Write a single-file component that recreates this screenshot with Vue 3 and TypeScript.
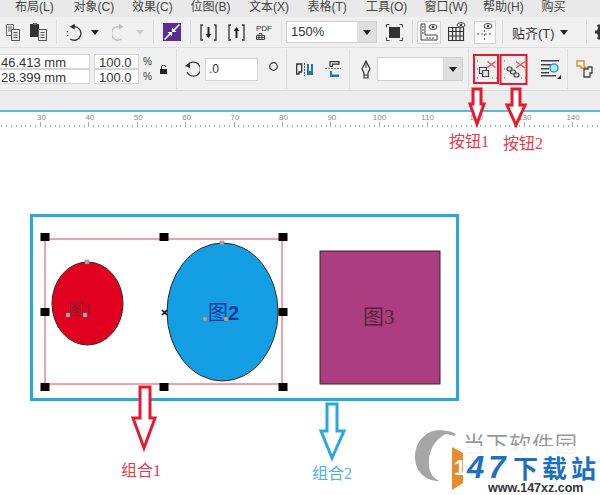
<template>
  <div class="page">
    <!-- 菜单 -->
    <nav class="menu">
      <span v-for="m in menus" :key="m" class="menu-item">{{ m }}</span>
    </nav>

    <!-- 第一行工具栏 -->
    <div class="bar bar-top">
      <div class="group g-doc">
        <svg width="14" height="18" viewBox="0 0 14 18"><path d="M.5 1.500h7v11h-7zM2 4h4M2 6h4M2 8h4" fill="none" stroke="#666" /><path d="M5.500 6.500h8v11h-8z" fill="#e8e8e8" stroke="#555" /><path d="M7.500 9.500h4M7.500 12h4M7.500 14.500h4" stroke="#555" /></svg>
        <svg width="17" height="18" viewBox="0 0 17 18"><path d="M0 1h9v13H0z" fill="#333" /><path d="M3 0h4v2H3z" fill="#666" /><path d="M8.500 6.500h8v11h-8z" fill="#e8e8e8" stroke="#555" /><path d="M10.500 9.500h4M10.500 12h4M10.500 14.500h4" stroke="#555" /></svg>
      </div>
      <i class="sep"></i>
      <div class="group g-undo">
        <svg width="17" height="18" viewBox="0 0 17 18"><path d="M8 3.500a7 7 0 1 1-3.500 12.800" fill="none" stroke="#333" stroke-width="1.400" /><path d="M4 3.500L9 .5v6z" fill="#222" /><path d="M1.500 8v1.200M1.800 12v1.200" stroke="#333" stroke-width="1.400" /></svg>
        <b class="caret"></b>
        <svg class="redo" width="13" height="18" viewBox="0 0 13 18"><path d="M7 3.500a6.500 7 0 1 0 3 12.500" fill="none" stroke="#bbb" stroke-width="1.400" /><path d="M12 3.500L7 .5v6z" fill="#bbb" /></svg>
        <b class="caret caret-off"></b>
      </div>
      <i class="sep"></i>
      <svg width="18" height="18" viewBox="0 0 18 18"><path d="M0 0h18v18H0z" fill="#5c2d91" /><path d="M16.500 1.500L11 7M1.500 16.500L7 11" stroke="#fff" stroke-width="1.600" /><path d="M9 9V4.500L4.500 9zM9 9v4.500L13.500 9z" fill="#fff" transform="rotate(90 9 9)" /></svg>
      <i class="sep"></i>
      <div class="group g-imp">
        <svg width="17" height="17" viewBox="0 0 17 17"><path d="M3 1H1v15h2M14 1h2v15h-2" fill="none" stroke="#333" stroke-width="1.300" /><path d="M8.500 3v8" stroke="#222" stroke-width="2" /><path d="M5.500 10h6l-3 4z" fill="#222" /></svg>
        <svg width="17" height="17" viewBox="0 0 17 17"><path d="M3 1H1v15h2M14 1h2v15h-2" fill="none" stroke="#333" stroke-width="1.300" /><path d="M8.500 14V6" stroke="#222" stroke-width="2" /><path d="M5.500 7h6l-3-4z" fill="#222" /></svg>
        <div class="pdf">
          <span>PDF</span>
          <svg width="9" height="7" viewBox="0 0 9 7"><path d="M.5 2.500h8v4h-8zM3 .5h3v2H3zM3 2.500v4M6 2.500v4M.5 4.500h8" fill="none" stroke="#444" /></svg>
        </div>
      </div>
      <i class="sep sep-zoom"></i>
      <div class="combo combo-zoom">
        <span class="combo-text">150%</span>
        <span class="combo-drop"><b class="caret"></b></span>
      </div>
      <svg class="fit" width="17" height="17" viewBox="0 0 17 17"><path d="M3 3h11v11H3z" fill="#333" /><path d="M.5 3.500V.5h3M13.500.5h3v3M16.500 13.500v3h-3M3.500 16.500h-3v-3" fill="none" stroke="#444" /></svg>
      <i class="sep sep-fit"></i>
      <div class="group g-view">
        <span class="view view-on">
          <svg width="20" height="20" viewBox="0 0 20 20"><path d="M2 2h4v11h12v5H2z" fill="none" stroke="#444" /><path d="M3 5h2M3 8h2M3 11h2M8 15v2M11 15v2M14 15v2" stroke="#444" /><ellipse cx="14" cy="5" rx="4" ry="2.500" fill="none" stroke="#444" /><circle cx="14" cy="5" r="1.300" fill="#333" /></svg>
        </span>
        <span class="view view-plain">
          <svg width="18" height="20" viewBox="0 0 18 20"><path d="M.5 5.500h15v13H.5zM.5 9.500h15M.5 14h15M4.500 5.500v13M8 5.500v13M12 5.500v13" fill="none" stroke="#333" stroke-width="1.200" /><ellipse cx="13" cy="3" rx="4" ry="2.300" fill="#f0f0f0" stroke="#444" /><circle cx="13" cy="3" r="1.200" fill="#333" /></svg>
        </span>
        <span class="view view-on view-last">
          <svg width="18" height="20" viewBox="0 0 18 20"><path d="M8.500 4v15M1 12h15" stroke="#666" stroke-dasharray="2 2" /><ellipse cx="12" cy="4" rx="4" ry="2.500" fill="none" stroke="#444" /><circle cx="12" cy="4" r="1.200" fill="#333" /></svg>
        </span>
      </div>
      <i class="sep sep-view"></i>
      <span class="snap">贴齐(T)</span>
      <b class="caret caret-snap"></b>
      <i class="sep sep-snap"></i>
      <svg width="20" height="20" viewBox="0 0 20 20"><circle cx="10" cy="10" r="6" fill="none" stroke="#333" stroke-width="4" /><path d="M10 0v4M10 16v4M0 10h4M16 10h4M3 3l3 3M14 14l3 3M17 3l-3 3M6 14l-3 3" stroke="#333" stroke-width="3" /></svg>
    </div>

    <!-- 第二行属性栏 -->
    <div class="bar bar-prop">
      <div class="stack stack-size">
        <span>46.413 mm</span>
        <span>28.399 mm</span>
      </div>
      <div class="stack stack-pct">
        <span>100.0</span>
        <span>100.0</span>
      </div>
      <div class="pct"><span>%</span><span>%</span></div>
      <svg class="lock" width="7" height="9" viewBox="0 0 7 9"><path d="M0 4h7v5H0z" fill="#222" /><path d="M1.500 4V2a2 2 0 0 1 4 0" fill="none" stroke="#222" /></svg>
      <i class="sep sep-lock"></i>
      <svg width="15" height="16" viewBox="0 0 15 16"><path d="M5 2a7 7 0 1 1-3 9" fill="none" stroke="#333" stroke-width="1.200" /><path d="M0 5l5-4v6z" fill="#333" /></svg>
      <div class="field-angle">.0</div>
      <svg class="ring" width="9" height="9" viewBox="0 0 9 9"><circle cx="4.500" cy="4.500" r="3.800" fill="none" stroke="#333" stroke-width="1.200" /></svg>
      <i class="sep sep-ring"></i>
      <svg class="mirror" width="17" height="13" viewBox="0 0 17 13"><path d="M.7 1h5v8H3v2H.7z" fill="none" stroke="#333" stroke-width="1.300" /><path d="M8.500 0v13" stroke="#555" stroke-dasharray="2 1" /><path d="M11 1h2v7h2V1h2v11h-6z" fill="#1f78b4" /></svg>
      <svg class="mirror-2" width="16" height="16" viewBox="0 0 16 16"><path d="M5 .7h9v2.500H7.500v2.300H5z" fill="none" stroke="#333" stroke-width="1.200" /><path d="M0 7.500h16" stroke="#777" stroke-dasharray="2 1" /><path d="M5 10h2v3.500h7V16H5z" fill="#1f78b4" /></svg>
      <i class="sep sep-mirror"></i>
      <svg class="pen" width="10" height="19" viewBox="0 0 10 19"><path d="M5 1l4 8-2 4v5H3v-5L1 9z" fill="none" stroke="#333" stroke-width="1.200" /><path d="M5 1v7M3 15h4" stroke="#333" /></svg>
      <div class="combo combo-pen">
        <span class="combo-text"></span>
        <span class="combo-drop"><b class="caret"></b></span>
      </div>
      <i class="sep sep-pen"></i>
      <span class="hit hit-1">
        <svg width="22" height="22" viewBox="0 0 22 22"><path d="M11.500 3.500l8 6M19.500 3.500l-8 6" stroke="#e8554e" stroke-width="1.400" /><path d="M3.500 9.500h7v6h-7z" fill="none" stroke="#444" stroke-width="1.200" /><path d="M6.500 12.500h6v6h-6z" fill="#e4e4e4" stroke="#444" stroke-width="1.200" /><path d="M1 3h1M1 11h1M1 20h1M20 20h1M16 20h1" stroke="#666" /></svg>
      </span>
      <span class="hit hit-2">
        <svg width="24" height="22" viewBox="0 0 24 22"><path d="M13 3.500l9 6.500M22 3.500l-9 6.500" stroke="#e8554e" stroke-width="1.400" /><rect x="4" y="9" width="5" height="4" rx="2" fill="#ddd" stroke="#444" stroke-width="1.200" /><rect x="7.500" y="12" width="5" height="4" rx="2" fill="#ddd" stroke="#444" stroke-width="1.200" /><rect x="11" y="15" width="5" height="4" rx="2" fill="#ddd" stroke="#444" stroke-width="1.200" /><path d="M1 3h1M1 11h1M1 20h1M22 20h1M18 20h1" stroke="#666" /></svg>
      </span>
      <svg class="find" width="20" height="20" viewBox="0 0 20 20"><path d="M0 1h18v1.500H0zM0 5h12v1.500H0zM0 9h8v1.500H0zM0 13h8v1.500H0zM0 16h15v1.500H0z" fill="#444" /><circle cx="13" cy="9" r="4" fill="#bfe3f5" stroke="#2a9fd6" stroke-width="1.500" /><path d="M20 16v4h-4z" fill="#222" /></svg>
      <i class="sep sep-find"></i>
      <svg width="18" height="18" viewBox="0 0 18 18"><path d="M1 1h7v5l2 2H5V6H1z" fill="#fff" stroke="#e8862e" stroke-width="1.500" /><path d="M8 9h4V7h4v6h-2v4H8z" fill="none" stroke="#444" stroke-width="1.300" /></svg>
    </div>

    <div class="strip"></div>

    <!-- 标尺 -->
    <svg class="ruler" width="600" height="15" viewBox="0 0 600 15">
      <rect width="600" height="15" fill="#fff" />
      <path :d="rulerTicks" stroke="#aaa" fill="none" />
      <text v-for="l in rulerLabels" :key="l.text" :x="l.x" y="8" class="ruler-text">{{ l.text }}</text>
    </svg>

    <div class="canvas"></div>

    <!-- 画布上的图形和标注 -->
    <svg class="overlay" width="600" height="495" viewBox="0 0 600 495">
      <rect x="474" y="55" width="24" height="28" class="hit-box" />
      <rect x="500.500" y="55" width="26" height="29" class="hit-box" />
      <polygon v-for="a in arrows.slice(0, 2)" :key="a.id" :points="arrowPoints(a)" :stroke="a.color" class="arrow" />
      <text x="449" y="147" class="label red">按钮1</text>
      <text x="503" y="149" class="label red">按钮2</text>
      <text x="121" y="476" class="label red">组合1</text>
      <text x="312" y="479" class="label blue">组合2</text>

      <rect x="31.500" y="215.500" width="426" height="184" class="outer" />
      <polygon v-for="a in arrows.slice(2)" :key="a.id" :points="arrowPoints(a)" :stroke="a.color" class="arrow" />
      <ellipse cx="87.500" cy="303.500" rx="35.500" ry="41.500" fill="#e2001f" class="shape" />
      <ellipse cx="222.500" cy="312" rx="55.500" ry="69" fill="#149fe4" class="shape" />
      <rect x="320" y="251" width="120" height="133" fill="#ab3d80" class="shape" />
      <text x="68" y="315" class="fig fig-1">图1</text>
      <text x="208" y="320" class="fig fig-2">图<tspan class="fig-2-num">2</tspan></text>
      <text x="363" y="324" class="fig fig-3">图3</text>
      <rect x="45" y="239" width="237" height="145" class="select-box" />
      <rect v-for="h in handles" :key="h[0] + '-' + h[1]" :x="h[0] - 4.500" :y="h[1] - 4" width="9" height="8" fill="#000" />
      <rect v-for="(n, i) in nodes" :key="i" :x="n[0] - 2" :y="n[1] - 2" width="4" height="4" class="node" />
      <path d="M162 310l5 5M167 310l-5 5" stroke="#000" stroke-width="1.600" />

      <!-- 水印 -->
      <path d="M440 430c-14 0-25 12-25 27c0 14 10 24 24 24c-8-4-11-12-10-22c1-12 8-22 21-27c-3-1-6-2-10-2z" fill="#a6a6a6" />
      <path d="M445 431c4 0 8 1 11 3l-2 2c-3-1-6-2-9-2z" fill="#a6a6a6" />
      <text x="463" y="452" class="wm-top">当下软件园</text>
      <rect x="462" y="446" width="138" height="12" fill="#fff" opacity=".88" />
      <polygon points="452,447 463,453 463,483 452,490" fill="#e98a2b" />
      <text x="454" y="475" class="wm-one">1</text>
      <text x="467" y="478" class="wm-main">47</text>
      <text x="513" y="478" class="wm-cjk">下载站</text>
      <text x="488" y="492" class="wm-url">www.147xz.com</text>
    </svg>
  </div>
</template>

<script setup lang="ts">
import { computed } from 'vue'

type Arrow = {
  id: string
  color: string
  left: number
  right: number
  top: number
  neck: number
  headL: number
  headR: number
  tipX: number
  tipY: number
}

const menus = ['布局(L)', '对象(C)', '效果(C)', '位图(B)', '文本(X)', '表格(T)', '工具(O)', '窗口(W)', '帮助(H)', '购买']

const red = '#e6192e'
const blue = '#29a8e0'

const arrows: Arrow[] = [
  { id: 'btn1', color: red, left: 473, right: 481, top: 89, neck: 104, headL: 470, headR: 484, tipX: 477, tipY: 124 },
  { id: 'btn2', color: red, left: 512, right: 520, top: 89, neck: 105, headL: 507, headR: 525, tipX: 516, tipY: 125 },
  { id: 'grp1', color: red, left: 140, right: 150, top: 387, neck: 418, headL: 133, headR: 155, tipX: 144, tipY: 448 },
  { id: 'grp2', color: blue, left: 327, right: 337, top: 404, neck: 431, headL: 321, headR: 344, tipX: 332, tipY: 458 },
]

const handles = [
  [45, 237], [164, 237], [283, 237],
  [45, 312], [283, 312],
  [45, 387], [164, 387], [283, 387],
]

const nodes = [
  [87, 262], [68, 315], [85, 315],
  [222, 243], [205, 319], [226, 319],
]

// 主刻度 48.4px，小刻度 4.84px，30 落在 x=40
const rulerLabels = [30, 40, 50, 60, 70, 80, 90, 100, 110, 120, 130, 140].map((v, i) => ({
  text: String(v),
  x: 40 + i * 48.4 - (v >= 100 ? 6 : 3),
}))

const rulerTicks = computed(() => {
  let d = ''
  for (let i = 0; i < 126; i++) {
    const x = Math.round(-8.4 + i * 4.84) + 0.5
    d += `M${x} ${i % 10 === 0 ? 10 : 13}V15`
  }
  return d
})

function arrowPoints(a: Arrow) {
  return [
    [a.left, a.top], [a.right, a.top], [a.right, a.neck], [a.headR, a.neck],
    [a.tipX, a.tipY], [a.headL, a.neck], [a.left, a.neck],
  ].map(p => p.join(',')).join(' ')
}
</script>

<style>
html, body { margin: 0; background: #fff; overflow: hidden; }
</style>

<style scoped>
.page {
  position: relative; width: 600px; height: 495px; overflow: hidden; background: #fff;
  font-family: "Liberation Sans", "Noto Sans CJK SC", sans-serif; color: #333;
}

/* 菜单 */
.menu { height: 17px; display: flex; padding-left: 15px; gap: 19.500px; background: #e9e9e9; overflow: hidden; }
.menu-item { font-size: 12px; line-height: 14px; color: #444; white-space: nowrap; width: 39px; flex: none; }

/* 工具栏 */
.bar { display: flex; align-items: center; background: #f0f0f0; box-sizing: border-box; }
.bar > * { flex: none; }
.bar-top { height: 31px; padding-left: 6px; border-bottom: 1px solid #dedede; }
.bar-prop { height: 43px; border-bottom: 1px solid #dedede; }
.group { display: flex; align-items: center; }
.g-doc { gap: 10px; }
.g-undo { width: 78px; }
.g-imp { gap: 11px; }
.redo { margin-left: 13px; }
.sep { width: 1px; height: 24px; margin: 0 9px; background: #dcdcdc; }
.sep-zoom { margin: 0 4px 0 7px; }
.sep-fit { margin: 0 4px 0 9px; }
.sep-view { margin: 0 9px 0 6px; }
.sep-snap { margin: 0 8px 0 18px; }
.caret { width: 0; height: 0; margin-left: 9px; border: 4px solid transparent; border-top: 5px solid #222; border-bottom: 0; }
.caret-off { border-top-color: #ccc; margin-left: 11px; }
.pdf { display: flex; flex-direction: column; width: 18px; font-size: 8px; line-height: 9px; color: #333; }
.combo { display: flex; background: #fff; border: 1px solid #cfcfcf; box-sizing: border-box; }
.combo-zoom { width: 91px; height: 22px; }
.combo-text { flex: 1; font-size: 13px; line-height: 20px; padding-left: 4px; }
.combo-drop { width: 19px; background: #dfdfdf; display: flex; align-items: center; justify-content: center; }
.combo-drop .caret { margin: 0; }
.fit { margin-left: 9px; }
.g-view { gap: 7px; }
.view { height: 23px; display: flex; align-items: center; justify-content: center; box-sizing: border-box; }
.view-on { width: 24px; background: #fbfbfb; border: 1px solid #d2d2d2; }
.view-plain { width: 18px; margin-right: 1px; }
.view-last { width: 22px; }
.snap { font-size: 13px; white-space: nowrap; width: 46px; }
.caret-snap { margin-left: 2px; }

/* 属性栏 */
.stack { display: flex; flex-direction: column; box-sizing: border-box; font-size: 13px; }
.stack span { height: 15px; line-height: 15px; background: #fff; border: 1px solid #d4d4d4; box-sizing: border-box; }
.stack-size { width: 90px; }
.stack-size span { border-left: 0; padding-left: 1px; }
.stack-pct { width: 45px; margin-left: 4px; }
.stack-pct span { padding-left: 4px; }
.pct { display: flex; flex-direction: column; margin-left: 4px; font-size: 10px; line-height: 15px; width: 12px; }
.lock { margin-left: 5px; }
.sep-lock { height: 40px; margin: 0 8px 0 9px; }
.field-angle { width: 53px; height: 23px; margin-left: 5px; box-sizing: border-box; background: #fff; border: 1px solid #d4d4d4; font-size: 12px; line-height: 21px; padding-left: 3px; }
.ring { margin-left: 11px; margin-bottom: 6px; }
.sep-ring { height: 40px; margin: 0 0 0 8px; }
.mirror { margin-left: 9px; }
.mirror-2 { margin-left: 12px; }
.sep-mirror { height: 40px; margin: 0 0 0 8px; }
.pen { margin-left: 11px; }
.combo-pen { width: 86px; height: 24px; margin-left: 6px; }
.sep-pen { height: 40px; margin: 0 5px 0 5px; }
.hit { display: flex; align-items: center; justify-content: center; }
.hit-1 { width: 25px; height: 29px; }
.hit-2 { width: 27px; height: 30px; margin-left: 2px; }
.find { margin-left: 13px; }
.sep-find { height: 40px; margin: 0 8px 0 6px; }

.strip { height: 19px; background: #ececec; border-bottom: 2px solid #5cb8de; }
.ruler { display: block; }
.ruler-text { font-size: 8px; fill: #888; }
.canvas { height: 369px; background: #fff; }

/* 叠加层 */
.overlay { position: absolute; top: 0; left: 0; pointer-events: none; }
.hit-box { fill: none; stroke: #e6192e; stroke-width: 2; }
.arrow { fill: #fff; stroke-width: 3; }
.label { font-size: 16px; font-family: "Liberation Serif", "Noto Sans CJK SC", serif; }
.red { fill: #e8394a; }
.blue { fill: #4cb3e0; }
.outer { fill: #fff; stroke: #29a8e0; stroke-width: 3; }
.shape { stroke: #2a2a2a; stroke-width: 1; }
.fig-1 { font-size: 16px; fill: #8c1f2c; font-family: "Liberation Serif", "Noto Sans CJK SC", serif; }
.fig-2 { font-size: 20px; fill: #10399a; }
.fig-2-num { font-weight: 700; }
.fig-3 { font-size: 21px; fill: #5e2145; font-family: "Liberation Serif", "Noto Sans CJK SC", serif; }
.select-box { fill: none; stroke: #e0475c; stroke-width: 1; }
.node { fill: #aaa; stroke: #777; stroke-width: .5; }

/* 水印 */
.wm-top { font-size: 22px; fill: #999; letter-spacing: 1px; }
.wm-one { font-size: 22px; font-weight: 700; fill: #fff; }
.wm-main { font-size: 31px; font-weight: 700; font-style: italic; fill: #1d6fc0; letter-spacing: 4px; }
.wm-cjk { font-size: 25px; font-weight: 700; fill: #1d6fc0; letter-spacing: 4px; }
.wm-url { font-size: 12.500px; font-weight: 700; fill: #333; }
</style>
